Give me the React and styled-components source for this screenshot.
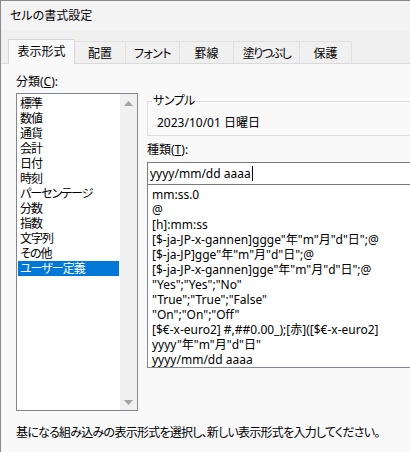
import React from "react";
import styled, { createGlobalStyle } from "styled-components";

const Global = createGlobalStyle`
  html, body { margin: 0; padding: 0; background: #f9f9f9; }
  * { box-sizing: border-box; }
`;

const Window = styled.div`
  width: 410px;
  height: 452px;
  overflow: hidden;
  border-top: 1px solid #8a8a8a;
  border-left: 1px solid #8a8a8a;
  background: #f9f9f9;
  font-family: "Noto Sans", "Noto Sans CJK JP", sans-serif;
  font-size: 12px;
  font-feature-settings: "palt";
  color: #000;
  display: flex;
  flex-direction: column;
`;

const TitleBar = styled.div`
  height: 30px;
  flex: none;
  background: #f3f3f3;
  display: flex;
  align-items: center;
  padding: 0 0 2px 9px;
  font-size: 12px;
`;

const TabStrip = styled.div`
  height: 33px;
  flex: none;
  background: #f0f0f0;
  border-bottom: 1px solid #dadada;
  display: flex;
  align-items: flex-end;
  padding-left: 7px;
`;

const Tab = styled.div`
  width: ${(p) => p.$w}px;
  height: ${(p) => (p.$active ? 25 : 22)}px;
  margin-bottom: ${(p) => (p.$active ? -1 : 0)}px;
  background: ${(p) => (p.$active ? "#f9f9f9" : "#f0f0f0")};
  border: 1px solid ${(p) => (p.$active ? "#d6d6d6" : "#e0e0e0")};
  border-bottom: none;
  border-left: ${(p) => (p.$first ? undefined : "none")};
  display: flex;
  align-items: center;
  justify-content: center;
  padding-bottom: ${(p) => (p.$active ? 3 : 0)}px;
  letter-spacing: ${(p) => p.$ls || 0}px;
  font-size: 12px;
`;

const Body = styled.div`
  flex: 1;
  padding: 10px 0 0 15px;
  display: flex;
  flex-direction: column;
`;

const Columns = styled.div`
  display: grid;
  grid-template-columns: 122px 300px;
  column-gap: 9px;
`;

const LeftColumn = styled.div`
  display: flex;
  flex-direction: column;
`;

const FieldLabel = styled.div`
  line-height: 16px;
  height: 16px;
  margin-bottom: ${(p) => p.$mb || 0}px;
  margin-top: ${(p) => p.$mt || 0}px;
  white-space: nowrap;
`;

const CategoryBox = styled.div`
  width: 122px;
  height: 318px;
  border: 1px solid #828790;
  background: #fff;
  display: flex;
`;

const CategoryItems = styled.div`
  flex: 1;
  padding: 2px 1px 1px;
  display: flex;
  flex-direction: column;
  letter-spacing: -1px;
`;

const CategoryItem = styled.div`
  height: 15px;
  line-height: 15px;
  padding-left: 2px;
  white-space: nowrap;
  background: ${(p) => (p.$selected ? "#0078d7" : "transparent")};
  color: ${(p) => (p.$selected ? "#fff" : "#000")};
`;

const ScrollBar = styled.div`
  width: 17px;
  flex: none;
  background: #f0f0f0;
  display: flex;
  flex-direction: column;
  justify-content: space-between;
  align-items: center;
  padding: 7px 0 5px;
`;

const RightColumn = styled.div`
  padding-top: 19px;
  display: flex;
  flex-direction: column;
`;

const GroupBox = styled.fieldset`
  margin: 0;
  padding: 6px 0 4px 0;
  min-width: 0;
  border: 1px solid #dcdcdc;
`;

const GroupLegend = styled.legend`
  margin-left: 4px;
  padding: 0 1px;
  line-height: 16px;
  font-size: 12px;
  letter-spacing: -0.5px;
`;

const SampleValue = styled.div`
  line-height: 16px;
  height: 16px;
  padding-left: 9px;
  white-space: nowrap;
`;

const FormatInput = styled.div`
  height: 23px;
  border: 1px solid #7a7a7a;
  background: #fff;
  display: flex;
  align-items: center;
  padding-left: 2px;
  white-space: nowrap;
`;

const Caret = styled.span`
  display: inline-block;
  width: 1px;
  height: 15px;
  background: #000;
  margin-left: 1px;
`;

const FormatList = styled.div`
  height: 183px;
  border: 1px solid #828790;
  border-top: none;
  background: #fff;
  padding: 2px 0 0 4px;
  display: flex;
  flex-direction: column;
`;

const FormatItem = styled.div`
  height: 15px;
  line-height: 15px;
  white-space: nowrap;
`;

const Footer = styled.div`
  margin-top: 14px;
  line-height: 16px;
  white-space: nowrap;
  letter-spacing: -0.75px;
`;

const Arrow = ({ up }) => (
  <svg width="9" height="5" viewBox="0 0 9 5">
    <polygon points={up ? "0,5 9,5 4.5,0" : "0,0 9,0 4.5,5"} fill="#a3a3a3" />
  </svg>
);

const tabs = [
  { label: "表示形式", w: 67, active: true },
  { label: "配置", w: 51 },
  { label: "フォント", w: 54, ls: -0.5 },
  { label: "罫線", w: 54 },
  { label: "塗りつぶし", w: 66, ls: -1.5 },
  { label: "保護", w: 52 },
];

const categories = [
  "標準",
  "数値",
  "通貨",
  "会計",
  "日付",
  "時刻",
  "パーセンテージ",
  "分数",
  "指数",
  "文字列",
  "その他",
  "ユーザー定義",
];

const formats = [
  "mm:ss.0",
  "@",
  "[h]:mm:ss",
  '[$-ja-JP-x-gannen]ggge"年"m"月"d"日";@',
  '[$-ja-JP]gge"年"m"月"d"日";@',
  '[$-ja-JP-x-gannen]gge"年"m"月"d"日";@',
  '"Yes";"Yes";"No"',
  '"True";"True";"False"',
  '"On";"On";"Off"',
  "[$€-x-euro2] #,##0.00_);[赤]([$€-x-euro2]",
  'yyyy"年"m"月"d"日"',
  "yyyy/mm/dd aaaa",
];

export default function App() {
  return (
    <>
      <Global />
      <Window>
        <TitleBar>セルの書式設定</TitleBar>
        <TabStrip>
          {tabs.map((t, i) => (
            <Tab key={t.label} $w={t.w} $active={t.active} $first={i === 0} $ls={t.ls}>
              {t.label}
            </Tab>
          ))}
        </TabStrip>
        <Body>
          <Columns>
            <LeftColumn>
              <FieldLabel $mb={3}>
                分類(<u>C</u>):
              </FieldLabel>
              <CategoryBox>
                <CategoryItems>
                  {categories.map((c) => (
                    <CategoryItem key={c} $selected={c === "ユーザー定義"}>
                      {c}
                    </CategoryItem>
                  ))}
                </CategoryItems>
                <ScrollBar>
                  <Arrow up />
                  <Arrow />
                </ScrollBar>
              </CategoryBox>
            </LeftColumn>
            <RightColumn>
              <GroupBox>
                <GroupLegend>サンプル</GroupLegend>
                <SampleValue>2023/10/01 日曜日</SampleValue>
              </GroupBox>
              <FieldLabel $mt={6} $mb={4}>
                種類(<u>T</u>):
              </FieldLabel>
              <FormatInput>
                yyyy/mm/dd aaaa
                <Caret />
              </FormatInput>
              <FormatList>
                {formats.map((f) => (
                  <FormatItem key={f}>{f}</FormatItem>
                ))}
              </FormatList>
            </RightColumn>
          </Columns>
          <Footer>
            基になる組み込みの表示形式を選択し、新しい表示形式を入力してください。
          </Footer>
        </Body>
      </Window>
    </>
  );
}
